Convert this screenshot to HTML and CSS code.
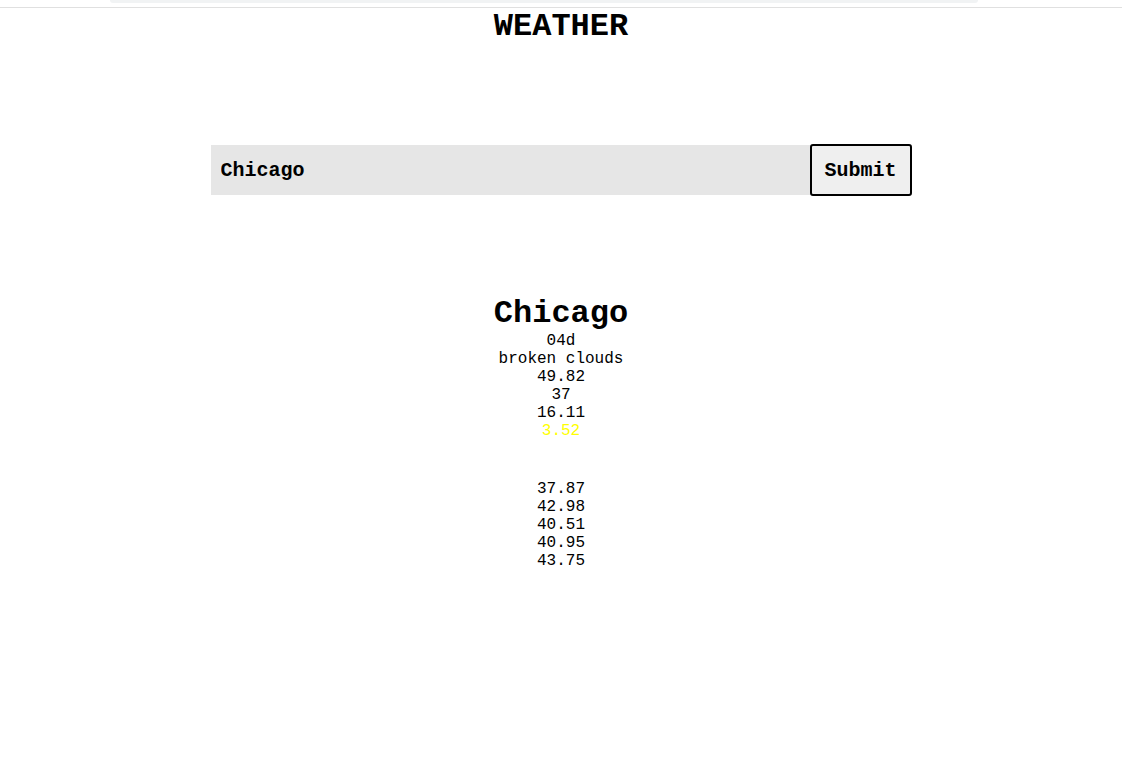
FILE: index.html
```html
<!DOCTYPE html>
<html>
<head>
<meta charset="utf-8">
<title>Weather</title>
<link rel="stylesheet" href="styles.css">
</head>
<body>
<div class="topbar"><div class="topbar-pill"></div></div>
<h1 class="title">WEATHER</h1>
<form class="search">
  <input class="search-input" type="text" value="Chicago">
  <button class="search-btn" type="button">Submit</button>
</form>
<section class="result">
  <h2 class="city">Chicago</h2>
  <div class="line">04d</div>
  <div class="line">broken clouds</div>
  <div class="line">49.82</div>
  <div class="line">37</div>
  <div class="line">16.11</div>
  <div class="line yellow">3.52</div>
  <div class="forecast">
    <div class="line">37.87</div>
    <div class="line">42.98</div>
    <div class="line">40.51</div>
    <div class="line">40.95</div>
    <div class="line">43.75</div>
  </div>
</section>
</body>
</html>
```
FILE: styles.css
```css
html, body {
  margin: 0;
  padding: 0;
  background: #fff;
}
body {
  font-family: "Liberation Mono", "Courier New", monospace;
  color: #000;
  width: 1122px;
}
.topbar {
  height: 7px;
  border-bottom: 1px solid #e0e0e0;
  display: flex;
  justify-content: center;
}
.topbar-pill {
  width: 868px;
  height: 3px;
  margin-left: -34px;
  background: #f1f3f4;
  border-radius: 0 0 6px 6px;
}
.title {
  margin: 0;
  font-size: 32px;
  font-weight: bold;
  text-align: center;
}
.search {
  display: flex;
  justify-content: center;
  align-items: center;
  margin-top: 99px;
}
.search-input {
  width: 599px;
  height: 50px;
  box-sizing: border-box;
  border: none;
  background: #e6e6e6;
  padding: 0 10px;
  font-family: "Liberation Mono", "Courier New", monospace;
  font-size: 20px;
  font-weight: bold;
  color: #000;
  outline: none;
}
.search-btn {
  width: 102px;
  height: 52px;
  box-sizing: border-box;
  border: 2px solid #000;
  border-radius: 3px;
  background: #efefef;
  font-family: "Liberation Mono", "Courier New", monospace;
  font-size: 20px;
  font-weight: bold;
  color: #000;
  padding: 0;
}
.result {
  margin-top: 100px;
  text-align: center;
  font-size: 16px;
}
.city {
  margin: 0;
  font-size: 32px;
  font-weight: bold;
  line-height: 36px;
}
.line {
  line-height: 18px;
}
.yellow {
  color: #ffff00;
}
.forecast {
  margin-top: 40px;
}
```
